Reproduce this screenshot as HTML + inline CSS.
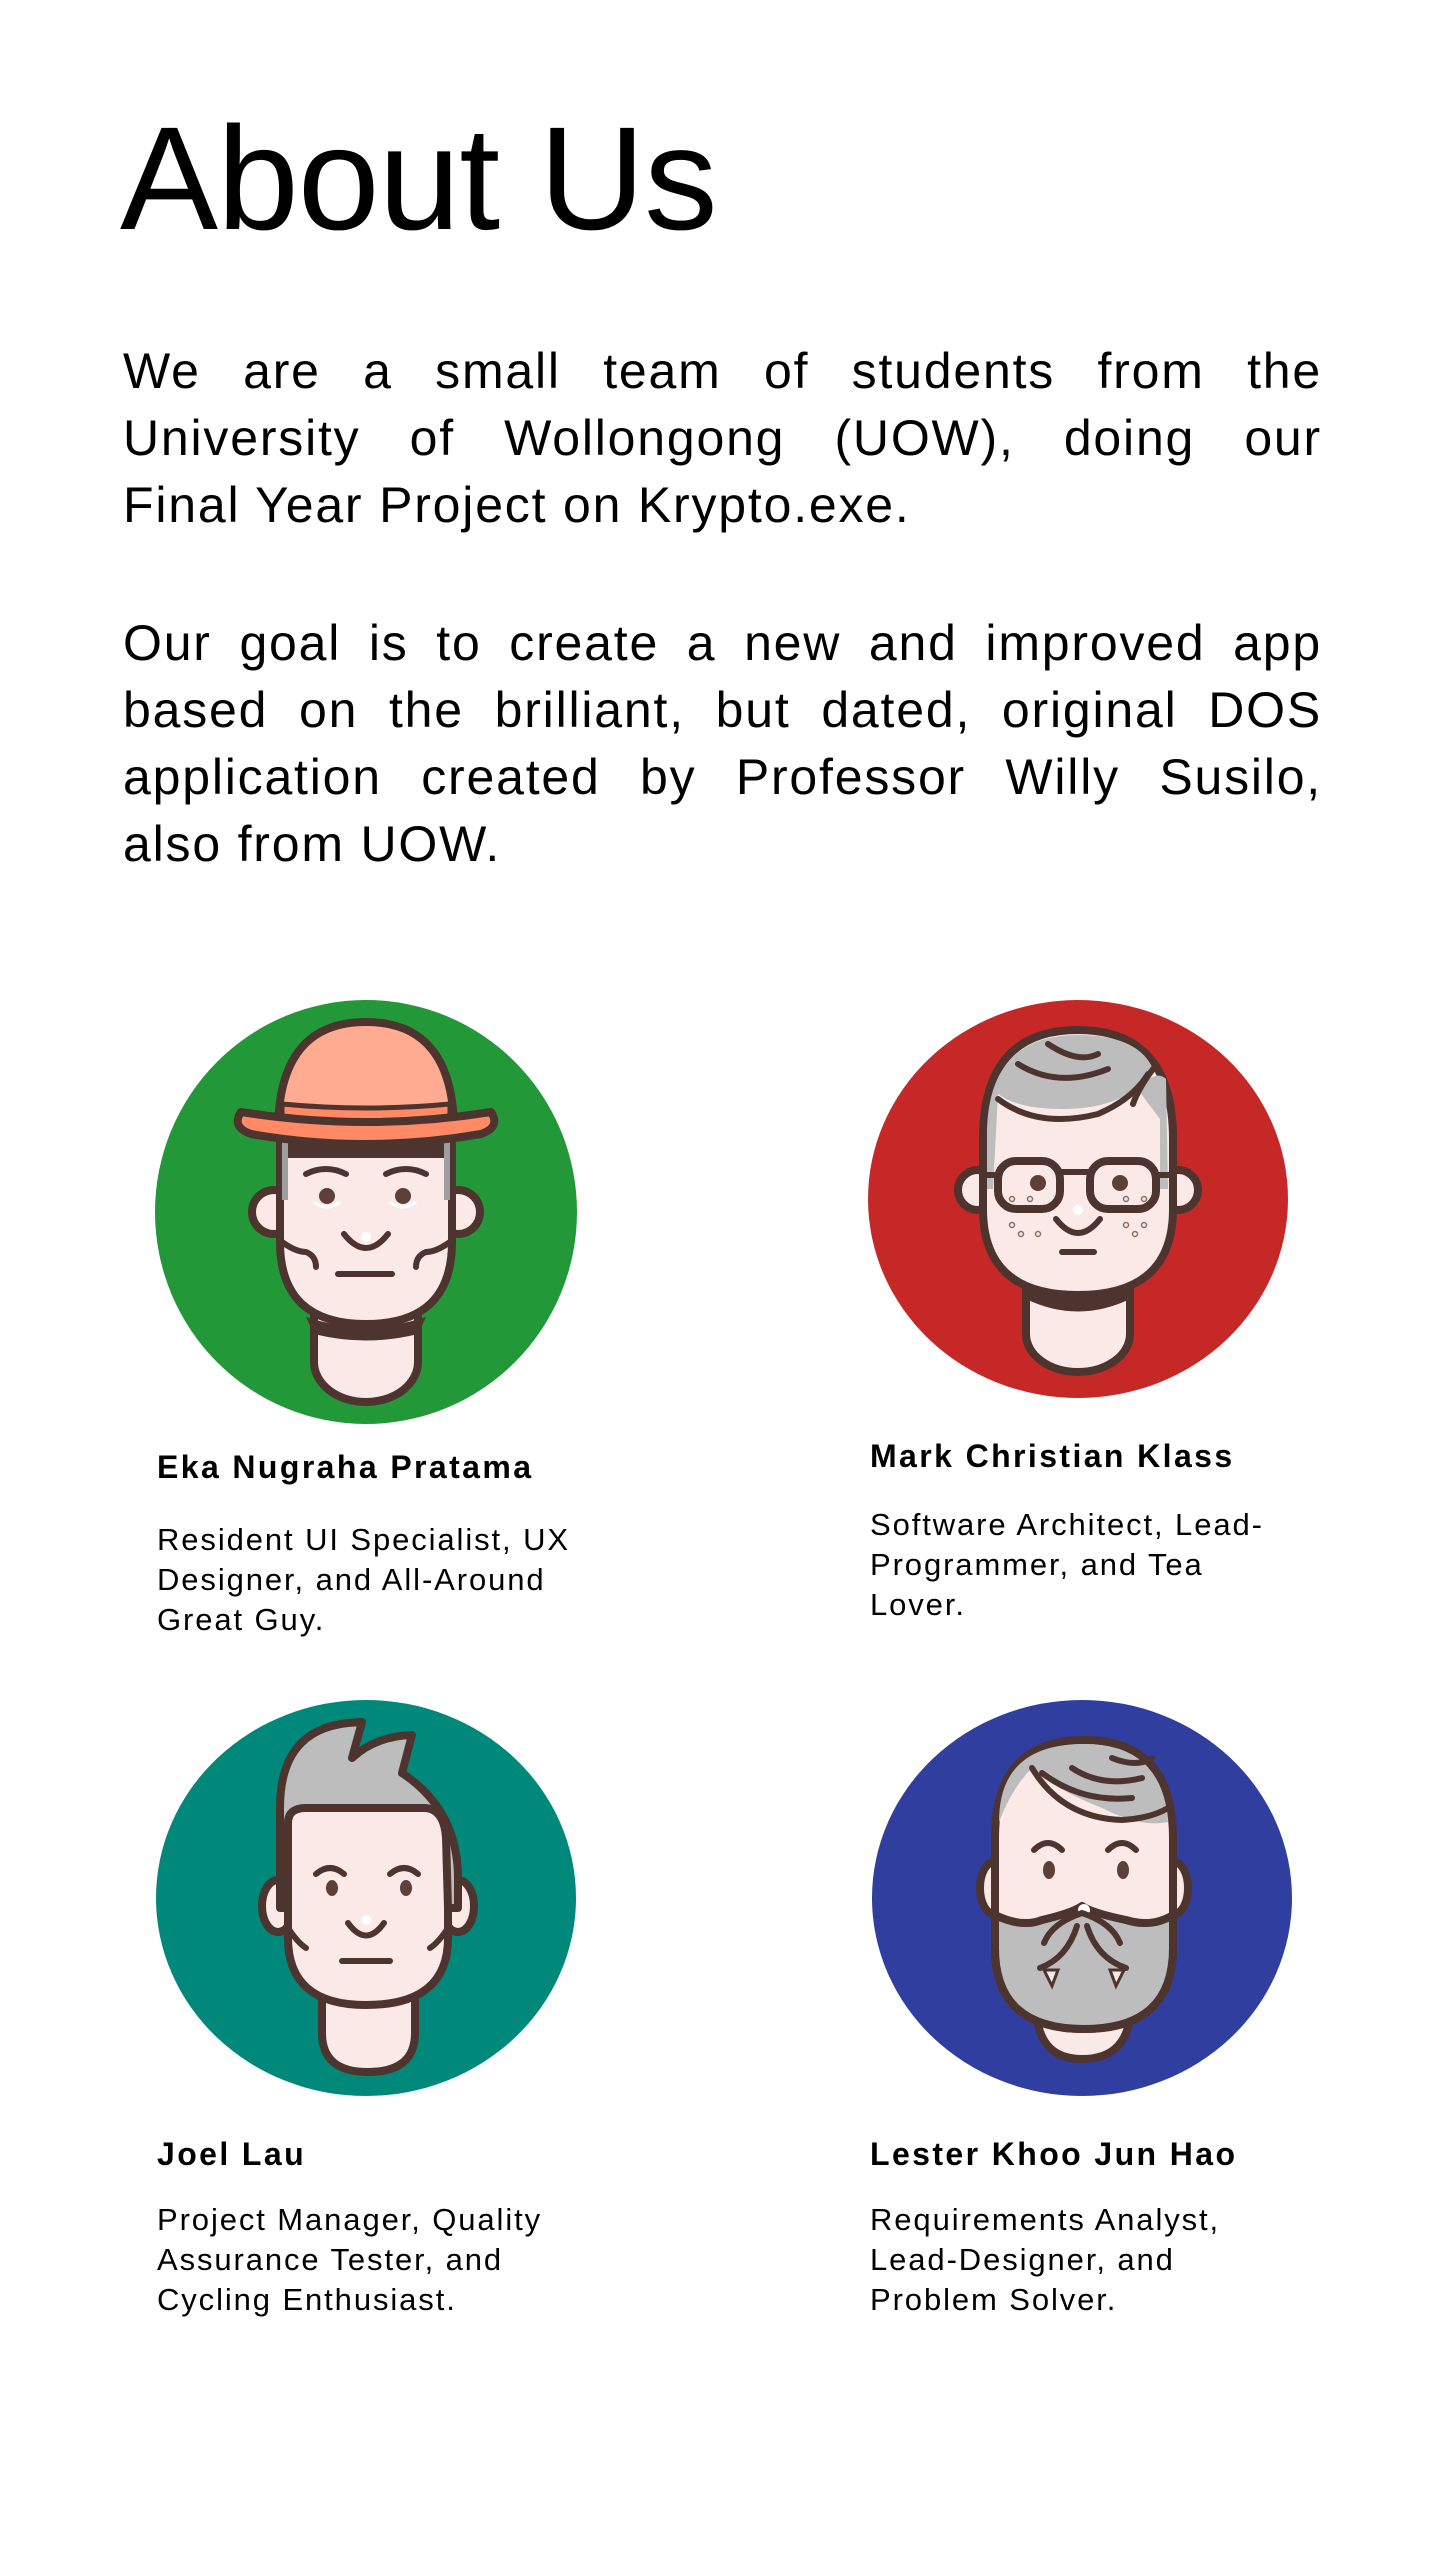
<!DOCTYPE html>
<html><head><meta charset="utf-8"><style>
html,body{margin:0;padding:0;background:#fff;}
body{width:1440px;height:2560px;position:relative;overflow:hidden;font-family:"Liberation Sans",sans-serif;color:#000;}
.t{position:absolute;left:120px;top:106px;font-size:147px;line-height:1;margin:0;font-weight:normal;letter-spacing:-1px;}
.p{position:absolute;left:123px;width:1199px;font-size:50px;line-height:67px;letter-spacing:1.8px;margin:0;}
.p div{white-space:nowrap;text-align:justify;text-align-last:justify;}
.p div.e{text-align-last:left;}
.n{position:absolute;font-size:32px;line-height:40px;font-weight:bold;letter-spacing:2.4px;}
.d{position:absolute;font-size:31px;line-height:40px;width:520px;letter-spacing:1.9px;}
svg{position:absolute;left:0;top:0;}
</style></head><body>
<svg width="1440" height="2560" viewBox="0 0 1440 2560">
<defs>
<style>
.o{stroke:#4e342e;stroke-width:8;stroke-linejoin:round;stroke-linecap:round;}
.l{fill:none;stroke:#4e342e;stroke-width:6;stroke-linecap:round;}
.sk{fill:#fbe9e7;}
.gr{fill:#bdbdbd;}
</style>
</defs>
<ellipse cx="366" cy="1212" rx="211" ry="212" fill="#229838"/>
<g transform="translate(366,1212)">
<path class="o sk" d="M-52,70 L-52,150 A52,40 0 0 0 52,150 L52,70 Z"/>
<circle class="o sk" cx="-92" cy="0" r="22"/><circle class="o sk" cx="92" cy="0" r="22"/>
<path class="o sk" d="M-86,-80 L-86,30 Q-86,112 0,112 Q86,112 86,30 L86,-80 Z"/>
<path d="M-60,105 Q0,125 60,105 L52,122 Q0,135 -52,122Z" fill="#4e342e"/>
<rect x="-84" y="-72" width="168" height="18" fill="#4e342e"/>
<rect x="-84" y="-72" width="6" height="60" fill="#9e9e9e"/><rect x="78" y="-72" width="6" height="60" fill="#9e9e9e"/>
<path class="o" fill="#ffab91" d="M-88,-80 Q-88,-190 0,-190 Q88,-190 88,-80 Z"/>
<path d="M-84,-108 Q0,-100 84,-108 L84,-84 L-84,-84Z" fill="#ff8a65" stroke="#4e342e" stroke-width="5"/>
<path class="o" fill="#ff8a65" d="M-125,-100 Q0,-80 125,-100 Q135,-85 115,-78 Q0,-58 -115,-78 Q-135,-85 -125,-100Z"/>
<path class="l" d="M-60,-38 Q-40,-48 -20,-38 M20,-38 Q40,-48 60,-38"/>
<circle cx="-39" cy="-16" r="8" fill="#5d4037"/><circle cx="37" cy="-16" r="8" fill="#5d4037"/>
<path d="M-52,-10 Q-39,0 -26,-10" stroke="#fff" stroke-width="3" fill="none"/><path d="M24,-10 Q37,0 50,-10" stroke="#fff" stroke-width="3" fill="none"/>
<path class="l" d="M-22,22 Q0,50 22,22"/><circle cx="0" cy="25" r="5" fill="#fff"/>
<path class="l" d="M-28,62 L26,62" stroke-width="4"/>
<path class="l" d="M-84,30 Q-70,40 -60,40 Q-50,44 -50,55 M84,30 Q70,40 60,40 Q50,44 50,55"/>
</g>
<ellipse cx="1078" cy="1199" rx="210" ry="199" fill="#c62828"/>
<g transform="translate(1078,1199)">
<path class="o sk" d="M-52,75 L-52,135 A52,38 0 0 0 52,135 L52,75 Z"/>
<path d="M-52,100 Q0,125 52,100 L52,80 L-52,80Z" fill="#4e342e"/>
<circle class="o sk" cx="-100" cy="-9" r="20"/><circle class="o sk" cx="100" cy="-9" r="20"/>
<path class="o sk" d="M-95,-60 Q-95,-169 0,-169 Q95,-169 95,-60 L95,10 Q95,96 0,96 Q-95,96 -95,10Z"/>
<path class="gr" d="M-91,-70 Q-88,-164 0,-164 Q60,-164 75,-130 Q50,-90 -15,-90 Q-60,-90 -80,-105 L-85,-10 L-91,-10Z"/>
<path class="gr" d="M60,-110 Q78,-130 88,-120 L90,-10 L82,-10 L82,-80 Q68,-98 60,-110Z"/>
<path class="l" d="M-80,-100 Q-40,-70 20,-85 Q55,-100 70,-125 M-60,-135 Q-20,-110 30,-130 M-30,-155 Q0,-135 20,-145 M75,-130 Q60,-110 55,-95"/>
<rect class="o" x="-80" y="-38" width="62" height="48" rx="18" fill="none" stroke-width="7"/>
<rect class="o" x="12" y="-38" width="66" height="48" rx="18" fill="none" stroke-width="7"/>
<path d="M-18,-27 L12,-27" stroke="#4e342e" stroke-width="6"/><path d="M-80,-24 L-95,-24 M78,-24 L95,-24" stroke="#4e342e" stroke-width="6"/>
<circle cx="-40" cy="-16" r="8" fill="#5d4037"/><circle cx="42" cy="-16" r="8" fill="#5d4037"/>
<path class="l" d="M-22,20 Q0,48 22,20"/><circle cx="0" cy="11" r="5" fill="#fff"/>
<path class="l" d="M-16,53 L16,53" stroke-width="4"/>
<g fill="none" stroke="#8d6e63" stroke-width="1.5"><circle cx="-66" cy="0" r="2.5"/><circle cx="-48" cy="0" r="2.5"/><circle cx="-66" cy="26" r="2.5"/><circle cx="-57" cy="35" r="2.5"/><circle cx="-40" cy="35" r="2.5"/><circle cx="48" cy="0" r="2.5"/><circle cx="66" cy="0" r="2.5"/><circle cx="48" cy="26" r="2.5"/><circle cx="66" cy="26" r="2.5"/><circle cx="57" cy="35" r="2.5"/></g>
</g>
<ellipse cx="366" cy="1898" rx="210" ry="198" fill="#00897b"/>
<g transform="translate(366,1898)">
<path class="o sk" d="M-44,40 L-44,135 Q-44,174 2,174 Q49,174 49,135 L49,40 Z"/>
<path d="M-44,95 Q0,115 49,95 L49,60 L-44,60Z" fill="#4e342e"/>
<ellipse class="o sk" cx="-88" cy="8" rx="16" ry="26"/><ellipse class="o sk" cx="92" cy="8" rx="16" ry="26"/>
<path class="o gr" d="M-86,10 L-86,-90 Q-86,-168 -18,-175 L-4,-176 L-14,-140 Q10,-162 46,-163 L36,-125 Q92,-88 92,-20 L92,10 Z"/>
<path class="o sk" d="M-78,10 L-78,-75 Q-78,-90 -60,-90 L58,-90 Q78,-90 80,-60 L82,10 L82,40 Q82,107 0,107 Q-78,107 -78,40Z"/>
<path class="l" d="M-50,-24 Q-36,-36 -22,-24 M24,-24 Q38,-36 52,-24"/>
<ellipse cx="-34" cy="-10" rx="6" ry="8" fill="#5d4037"/><ellipse cx="40" cy="-10" rx="6" ry="8" fill="#5d4037"/>
<path class="l" d="M-18,25 Q0,50 18,25"/><circle cx="0" cy="22" r="5" fill="#fff"/>
<path class="l" d="M-24,63 L24,63" stroke-width="6"/>
<path class="l" d="M-78,30 Q-68,45 -60,50 M82,30 Q72,45 64,50"/>
</g>
<ellipse cx="1082" cy="1898" rx="210" ry="198" fill="#303f9f"/>
<g transform="translate(1082,1898)">
<path class="o sk" d="M-45,100 L-45,120 Q-40,161 0,161 Q42,161 48,120 L48,100Z"/>
<ellipse class="o sk" cx="-88" cy="-10" rx="14" ry="26"/><ellipse class="o sk" cx="92" cy="-10" rx="14" ry="26"/>
<path class="o sk" d="M-87,-60 Q-87,-158 2,-158 Q91,-158 91,-60 L91,50 Q91,131 2,131 Q-87,131 -87,50Z"/>
<path class="o gr" d="M-87,17 Q-60,30 -40,22 Q-10,15 0,8 Q10,15 44,22 Q70,30 91,17 L91,50 Q91,131 2,131 Q-87,131 -87,50Z"/>
<path class="gr" d="M-83,-76 Q-83,-154 2,-154 Q80,-154 86,-76 L86,-76 Q60,-70 20,-90 Q-30,-110 -50,-130 Q-70,-110 -83,-76Z"/>
<path class="l" d="M-50,-130 Q-20,-80 40,-78 Q70,-80 86,-90 M-40,-125 Q0,-95 50,-100 M-10,-130 Q20,-110 60,-120 M30,-140 Q55,-130 70,-140"/>
<path class="l" d="M-48,-48 Q-34,-62 -20,-48 M26,-48 Q40,-62 54,-48"/>
<ellipse cx="-33" cy="-28" rx="6" ry="9" fill="#5d4037"/><ellipse cx="41" cy="-28" rx="6" ry="9" fill="#5d4037"/>
<circle cx="2" cy="12" r="6" fill="#fff"/>
<path class="l" d="M0,15 Q-30,25 -38,45 M0,15 Q30,25 38,45 M-5,28 Q-15,60 -42,70 M5,28 Q15,60 44,70"/>
<path d="M-38,72 L-30,88 L-24,72Z M28,72 L34,88 L42,72Z" fill="#fbe9e7" stroke="#4e342e" stroke-width="3"/>
</g>
</svg>
<h1 class="t">About Us</h1>
<div class="p" style="top:338px">
<div>We are a small team of students from the</div>
<div>University of Wollongong (UOW), doing our</div>
<div class="e">Final Year Project on Krypto.exe.</div>
</div>
<div class="p" style="top:610px">
<div>Our goal is to create a new and improved app</div>
<div>based on the brilliant, but dated, original DOS</div>
<div>application created by Professor Willy Susilo,</div>
<div class="e">also from UOW.</div>
</div>
<div class="n" style="left:157px;top:1447px">Eka Nugraha Pratama</div>
<div class="d" style="left:157px;top:1520px">Resident UI Specialist, UX<br>Designer, and All-Around<br>Great Guy.</div>
<div class="n" style="left:870px;top:1436px">Mark Christian Klass</div>
<div class="d" style="left:870px;top:1505px">Software Architect, Lead-<br>Programmer, and Tea<br>Lover.</div>
<div class="n" style="left:157px;top:2134px">Joel Lau</div>
<div class="d" style="left:157px;top:2200px">Project Manager, Quality<br>Assurance Tester, and<br>Cycling Enthusiast.</div>
<div class="n" style="left:870px;top:2134px">Lester Khoo Jun Hao</div>
<div class="d" style="left:870px;top:2200px">Requirements Analyst,<br>Lead-Designer, and<br>Problem Solver.</div>
</body></html>
